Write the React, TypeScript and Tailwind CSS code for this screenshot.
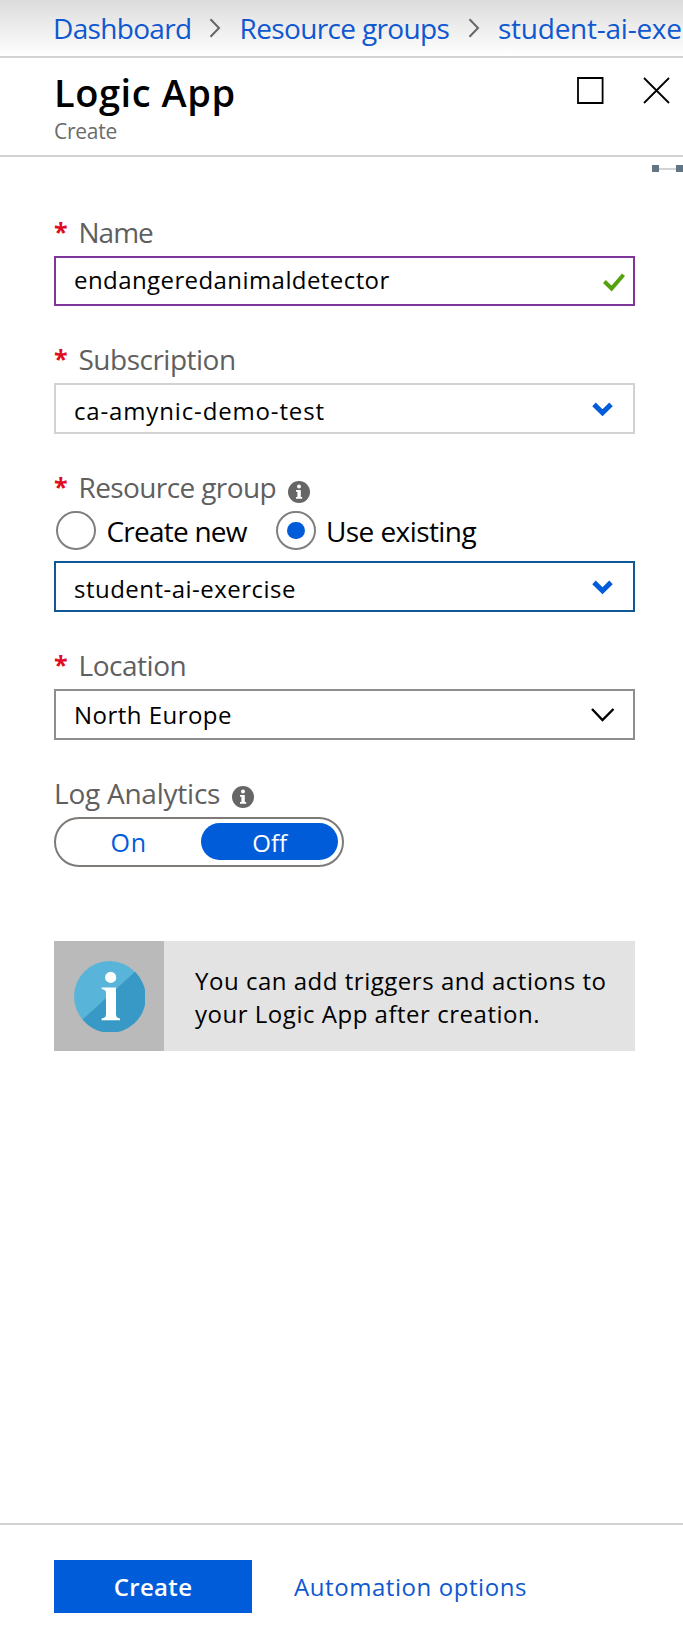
import React, { type ReactNode } from 'react';

function CrumbArrow() {
  return (
    <svg className="shrink-0" width="12" height="20" viewBox="0 0 12 20" fill="none" stroke="#666" strokeWidth="2">
      <path d="M1.5 1.2 10 10 1.5 18.8" />
    </svg>
  );
}

function InfoDot({ className }: { className: string }) {
  return (
    <svg className={className} width="22" height="22" viewBox="0 0 22 22">
      <circle cx="11" cy="11" r="11" fill="#666" />
      <circle cx="11" cy="5.6" r="2" fill="#fff" />
      <path d="M8 9h4.8v7h1.4v1.8H8V16h1.4v-5.2H8z" fill="#fff" />
    </svg>
  );
}

function BlueChevron() {
  return (
    <svg className="mt-px" width="22" height="15" viewBox="0 0 22 15" fill="none" stroke="#015cda" strokeWidth="5">
      <path d="M2 2.4 10.5 10.7 19 2.4" />
    </svg>
  );
}

function Label({ children, spacing }: { children: ReactNode; spacing: string }) {
  return (
    <div className="flex h-12 items-center text-[28px] text-[#5f5f5f]">
      <span className="w-[24.5px] pb-[3px] text-[25px] leading-9 font-bold text-[#e00b1c]">*</span>
      <span className={`leading-[48px] ${spacing}`}>{children}</span>
    </div>
  );
}

export default function App() {
  return (
    <div className="flex h-[1644px] w-[683px] flex-col overflow-hidden bg-white font-['Open_Sans',sans-serif] whitespace-nowrap text-black">
      <nav className="flex h-[58px] shrink-0 items-center border-b-2 border-[#d2d2d2] bg-linear-to-b from-[#dcdcdc] to-white pl-[53px] text-[28px] leading-[56px] text-[#0f58d0]">
        <span className="w-[156px] shrink-0 tracking-[-0.67px]">Dashboard</span>
        <CrumbArrow />
        <span className="ml-[18.5px] w-[228px] shrink-0 tracking-[-0.64px]">Resource groups</span>
        <CrumbArrow />
        <span className="ml-[18.5px] tracking-[-0.25px]">student-ai-exe</span>
      </nav>

      <header className="flex h-[99px] shrink-0 justify-between border-b-2 border-[#d2d2d2] pt-[10px] pr-[13px] pl-[54px]">
        <div>
          <h1 className="text-[38px] leading-[48px] font-semibold tracking-[0.56px]">Logic App</h1>
          <p className="text-[21px] leading-[31px] tracking-[-0.25px] text-[#6b6b6b]">Create</p>
        </div>
        <div className="flex gap-[39px] pt-[9px]">
          <svg width="27" height="27" viewBox="0 0 27 27" fill="none" stroke="#000" strokeWidth="1.8">
            <path d="M1 1h24.6v25H1z" />
          </svg>
          <svg width="27" height="27" viewBox="0 0 27 27" fill="none" stroke="#000" strokeWidth="1.8">
            <path d="M1 1 26 26M26 1 1 26" />
          </svg>
        </div>
      </header>

      <div className="flex h-[51px] shrink-0 items-start justify-end pt-2">
        <div className="size-[7px] bg-[#647480]" />
        <div className="mt-[3px] h-[2px] w-[17px] bg-[#d0d4d6]" />
        <div className="size-[7px] bg-[#647480]" />
      </div>

      <main className="w-[635px] grow pl-[54px]">
        <Label spacing="tracking-[-1px]">Name</Label>
        <div className="mb-[29px] flex h-[50px] items-center justify-between border-2 border-[#80359b] pr-[7px] pl-[18px]">
          <span className="pb-[2px] text-2xl tracking-[0.42px]">endangeredanimaldetector</span>
          <svg className="mt-[3px]" width="23" height="19" viewBox="0 0 23 19" fill="none" stroke="#56a20e" strokeWidth="4">
            <path d="M1.4 8.5 8.6 15.5 20.5 1.8" />
          </svg>
        </div>

        <Label spacing="tracking-[-0.5px]">Subscription</Label>
        <div className="mb-[29px] flex h-[51px] items-center justify-between border-2 border-[#d2d2d2] pr-[19px] pl-[18px]">
          <span className="pt-1 text-2xl tracking-[0.85px]">ca-amynic-demo-test</span>
          <BlueChevron />
        </div>

        <Label spacing="tracking-[-0.61px]">
          <span className="flex items-center">
            Resource group
            <InfoDot className="mt-[10px] ml-3" />
          </span>
        </Label>
        <div className="mb-[11px] flex h-[39px] items-center pl-[2px] text-[28px] leading-[40px]">
          <span className="h-[39px] w-10 rounded-full border-2 border-[#808080]" />
          <span className="ml-[10.5px] w-[169.5px] tracking-[-0.78px]">Create new</span>
          <span className="flex h-[39px] w-10 items-center justify-center rounded-full border-2 border-[#808080]">
            <span className="h-[17px] w-[18px] rounded-full bg-[#015cda]" />
          </span>
          <span className="ml-[10px] tracking-[-0.58px]">Use existing</span>
        </div>
        <div className="mb-[29px] flex h-[51px] items-center justify-between border-2 border-[#0f5796] pr-[19px] pl-[18px]">
          <span className="pt-1 text-2xl tracking-[0.48px]">student-ai-exercise</span>
          <BlueChevron />
        </div>

        <Label spacing="tracking-[-0.47px]">Location</Label>
        <div className="mb-[29px] flex h-[51px] items-center justify-between border-2 border-[#8e8e8e] pr-[18px] pl-[18px]">
          <span className="text-2xl tracking-[0.47px]">North Europe</span>
          <svg className="mt-px" width="24" height="14" viewBox="0 0 24 14" fill="none" stroke="#000" strokeWidth="2.4">
            <path d="M1 1 11.5 12 22.5 1" />
          </svg>
        </div>

        <div className="flex h-12 items-center text-[28px] text-[#5f5f5f]">
          <span className="leading-[48px] tracking-[-0.24px]">Log Analytics</span>
          <InfoDot className="mt-2 ml-3" />
        </div>
        <div className="mb-[74px] flex h-[50px] w-[290px] items-center rounded-full border-2 border-[#7d7a77] pr-1 text-2xl">
          <span className="w-[146px] pt-[2px] text-center text-[25px] tracking-[0.8px] text-[#015cda]">On</span>
          <span className="mb-px h-[37px] w-[137px] rounded-full bg-[#015cda] text-center leading-[40px] text-white">Off</span>
        </div>

        <div className="flex h-[110px] bg-[#e3e3e3]">
          <div className="flex w-[110px] items-center justify-center bg-[#bababa]">
            <svg width="71" height="71" viewBox="0 0 71 71">
              <circle cx="35.5" cy="35.5" r="35.5" fill="#59b4d9" />
              <path d="M61 10.8A35.5 35.5 0 1 1 8.6 58.5Z" fill="#3999c6" />
              <circle cx="36.7" cy="16.4" r="5.6" fill="#fff" />
              <path d="M27.6 26.6H42V53.5Q42 57 46 57.6V59.2H27.6V57.6Q32 57 32 53.5V31.5Q32 28.5 27.6 28Z" fill="#fff" />
            </svg>
          </div>
          <p className="pt-[23px] pl-[31px] text-2xl leading-[33px]">
            <span className="block tracking-[0.52px]">You can add triggers and actions to</span>
            <span className="block tracking-[0.52px]">your Logic App after creation.</span>
          </p>
        </div>
      </main>

      <footer className="flex h-[121px] shrink-0 items-start border-t-2 border-[#d2d2d2] pt-[35px] pl-[54px] text-2xl leading-[53px]">
        <button className="h-[53px] w-[198px] bg-[#015cda] font-semibold tracking-[0.34px] text-white">Create</button>
        <a className="ml-[42px] tracking-[0.57px] text-[#0f58d0]">Automation options</a>
      </footer>
    </div>
  );
}
